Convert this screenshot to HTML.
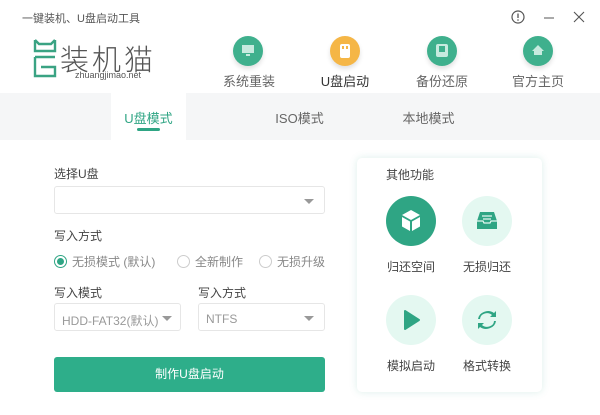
<!DOCTYPE html><html><head><meta charset="utf-8"><style>
*{margin:0;padding:0;box-sizing:border-box}
body{width:600px;height:415px;background:#fff;font-family:"Liberation Sans","Noto Sans CJK SC",sans-serif;position:relative;overflow:hidden;color:#333}
.a{position:absolute}
.t{font-size:12px;color:#444}
.nav .c{position:absolute;width:30px;height:30px;border-radius:50%;box-shadow:0 3px 5px rgba(0,0,0,.12)}
.nav .l{position:absolute;font-size:13px;color:#666;width:80px;text-align:center}
.sel{position:absolute;border:1px solid #e6e6e6;border-radius:3px;height:28px;background:#fff;font-size:12px;color:#999;padding:6px 7px}
.arr{position:absolute;right:10px;top:12px;border:5px solid transparent;border-top:5px solid #999;border-bottom:0}
.rd{position:absolute;top:255px;width:13px;height:13px;border:1px solid #ccc;border-radius:50%}
.rl{position:absolute;top:253px;font-size:12px;color:#888}
.ic{position:absolute;width:50px;height:50px;border-radius:50%;background:#e4f8f1}
.il{position:absolute;font-size:12px;color:#444;width:70px;text-align:center}
</style></head><body>
<div class="a t" style="left:22px;top:10px;font-size:11px;color:#555">一键装机、U盘启动工具</div>
<svg class="a" style="left:510px;top:10px" width="80" height="16"><circle cx="8" cy="7" r="6" fill="none" stroke="#555" stroke-width="1.2"/><line x1="8" y1="3.5" x2="8" y2="8" stroke="#555" stroke-width="1.3"/><circle cx="8" cy="10" r=".8" fill="#555"/><line x1="34" y1="8" x2="44" y2="8" stroke="#555"/><path d="M64 2l10 10M74 2l-10 10" stroke="#555" stroke-width="1.1"/></svg>
<svg class="a" style="left:30px;top:38px" width="30" height="42"><path d="M5 2v11h20V2M5 2l4 4h12l4-4" fill="none" stroke="#3aa383" stroke-width="2.4"/><path d="M5 19h20M5 19v19h20v-9H11" fill="none" stroke="#3aa383" stroke-width="2.4"/></svg>
<div class="a" style="left:60px;top:37px;font-size:29px;color:#555;letter-spacing:3px;font-weight:300">装机猫</div>
<div class="a" style="left:75px;top:70px;font-size:9px;color:#555">zhuangjimao.net</div>
<div class="nav">
<div class="c" style="left:233px;top:36px;background:#3fb08d"></div><svg class="a" style="left:241px;top:44px" width="14" height="14"><rect x="1" y="1" width="12" height="8" fill="#c7eadf"/><rect x="5" y="10" width="4" height="2" fill="#c7eadf"/></svg>
<div class="l" style="left:209px;top:71px">系统重装</div>
<div class="c" style="left:330px;top:36px;background:#f5b646"></div><svg class="a" style="left:339px;top:43px" width="12" height="16"><rect x="1" y="1" width="10" height="14" rx="2" fill="#fff"/><rect x="3" y="3" width="2" height="3" fill="#f5b646"/><rect x="7" y="3" width="2" height="3" fill="#f5b646"/></svg>
<div class="l" style="left:305px;top:71px;color:#333">U盘启动</div>
<div class="c" style="left:427px;top:36px;background:#3fb08d"></div><svg class="a" style="left:435px;top:43px" width="14" height="16"><rect x="1" y="1" width="12" height="13" rx="2" fill="#c7eadf"/><rect x="4" y="3" width="6" height="6" fill="#3fb08d"/></svg>
<div class="l" style="left:402px;top:71px">备份还原</div>
<div class="c" style="left:523px;top:36px;background:#3fb08d"></div><svg class="a" style="left:531px;top:44px" width="14" height="12"><path d="M7 1L1 7h2v4h8V7h2z" fill="#c7eadf"/></svg>
<div class="l" style="left:498px;top:71px">官方主页</div>
</div>
<div class="a" style="left:0;top:93px;width:600px;height:47px;background:#f5f6f7"></div>
<div class="a" style="left:111px;top:93px;width:75px;height:47px;background:#fff"></div>
<div class="a" style="left:111px;top:108px;width:75px;text-align:center;font-size:13px;color:#2fa584">U盘模式</div>
<div class="a" style="left:137px;top:128px;width:23px;height:3px;background:#2fa584;border-radius:2px"></div>
<div class="a" style="left:262px;top:108px;width:75px;text-align:center;font-size:13px;color:#666">ISO模式</div>
<div class="a" style="left:391px;top:108px;width:75px;text-align:center;font-size:13px;color:#666">本地模式</div>
<div class="a t" style="left:54px;top:165px">选择U盘</div>
<div class="sel" style="left:54px;top:186px;width:271px"><div class="arr"></div></div>
<div class="a t" style="left:54px;top:227px">写入方式</div>
<div class="rd" style="left:54px;border-color:#2fa584"><div style="margin:2px;width:7px;height:7px;border-radius:50%;background:#2fa584"></div></div>
<div class="rl" style="left:72px">无损模式 (默认)</div>
<div class="rd" style="left:177px"></div><div class="rl" style="left:195px">全新制作</div>
<div class="rd" style="left:259px"></div><div class="rl" style="left:277px">无损升级</div>
<div class="a t" style="left:54px;top:284px">写入模式</div>
<div class="a t" style="left:198px;top:284px">写入方式</div>
<div class="sel" style="left:54px;top:303px;width:127px;padding-top:8px">HDD-FAT32(默认)<div class="arr" style="right:8px"></div></div>
<div class="sel" style="left:198px;top:303px;width:127px;padding-top:8px">NTFS<div class="arr"></div></div>
<div class="a" style="left:54px;top:357px;width:271px;height:35px;background:#2eae8a;border-radius:3px;color:#fff;font-size:12px;text-align:center;line-height:35px">制作U盘启动</div>
<div class="a" style="left:357px;top:158px;width:185px;height:234px;border-radius:5px;box-shadow:0 0 8px rgba(60,160,140,.18);background:#fff"></div>
<div class="a t" style="left:386px;top:166px">其他功能</div>
<div class="ic" style="left:386px;top:196px;background:#2fa584"></div>
<svg class="a" style="left:400px;top:209px" width="22" height="24"><path d="M11 1l9 5-9 5-9-5z" fill="#fff"/><path d="M2 8l8 4.5V22l-8-4.5zM20 8l-8 4.5V22l8-4.5z" fill="#fff"/></svg>
<div class="il" style="left:376px;top:258px">归还空间</div>
<div class="ic" style="left:462px;top:196px"></div>
<svg class="a" style="left:476px;top:211px" width="22" height="20"><path d="M4 1h14l3 9v8H1v-8z" fill="#2fa584"/><path d="M6 5h10M7 8h8" stroke="#e4f8f1" stroke-width="1.3"/><path d="M1 10h6l1 2h6l1-2h6" fill="none" stroke="#e4f8f1" stroke-width="1.3"/></svg>
<div class="il" style="left:452px;top:258px">无损归还</div>
<div class="ic" style="left:386px;top:295px"></div>
<svg class="a" style="left:403px;top:309px" width="18" height="22"><path d="M2 2l14 9-14 9z" fill="#2fa584" stroke="#2fa584" stroke-linejoin="round" stroke-width="2"/></svg>
<div class="il" style="left:376px;top:357px">模拟启动</div>
<div class="ic" style="left:462px;top:295px"></div>
<svg class="a" style="left:477px;top:310px" width="20" height="20"><path d="M3 9a7 6 0 0 1 12-4l-2 2h6V1l-2 2A10 9 0 0 0 1 9z" fill="#2fa584"/><path d="M17 11a7 6 0 0 1-12 4l2-2H1v6l2-2a10 9 0 0 0 16-6z" fill="#2fa584"/></svg>
<div class="il" style="left:452px;top:357px">格式转换</div>
</body></html>
